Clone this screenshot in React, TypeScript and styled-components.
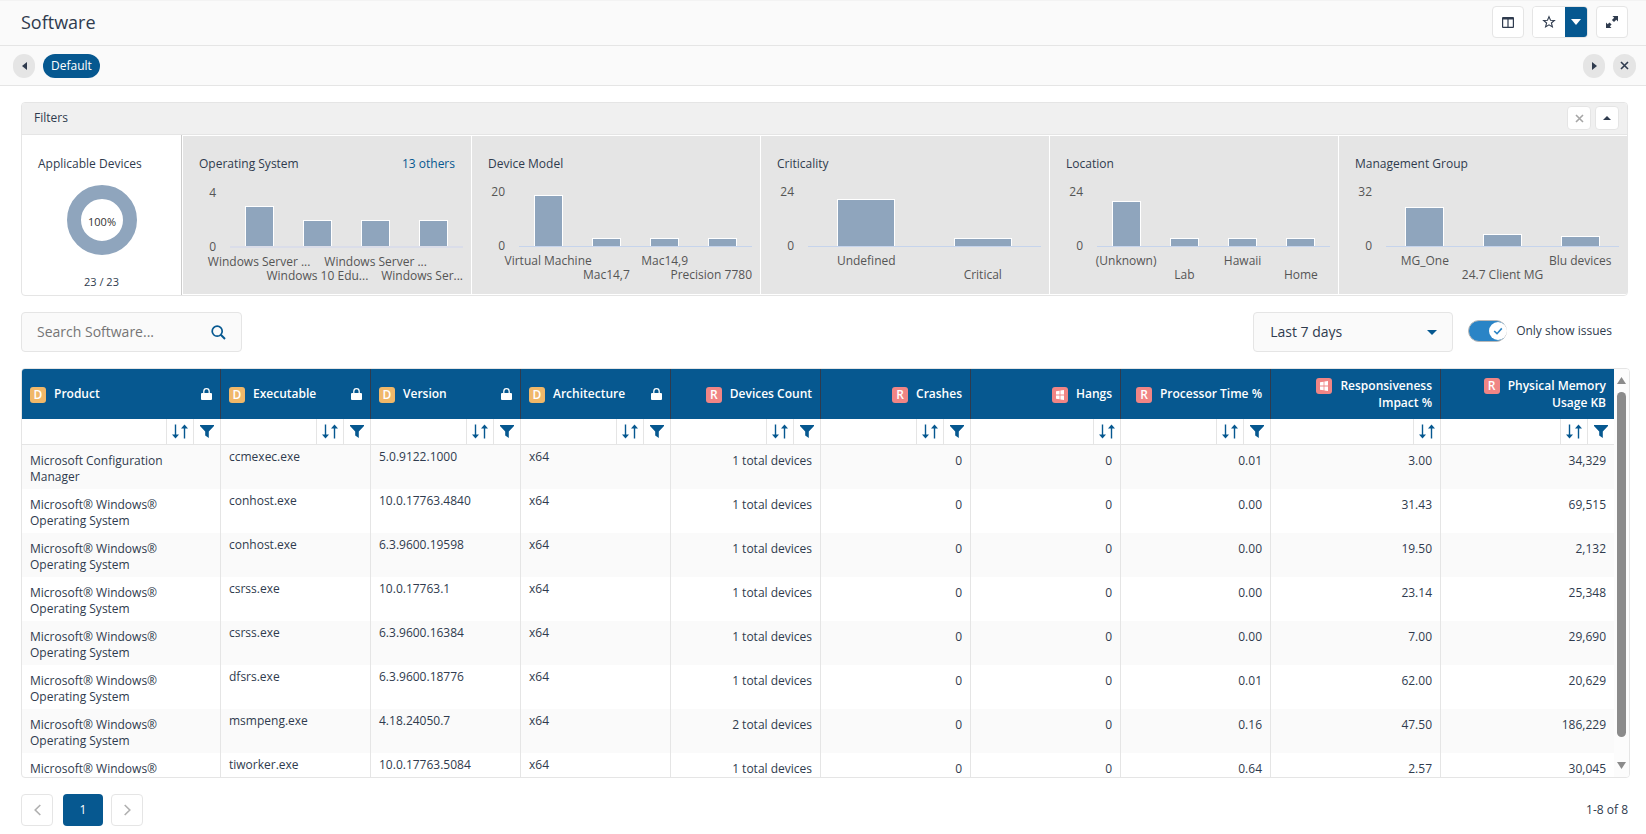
import React, { useState } from "react";
import styled, { createGlobalStyle, css } from "styled-components";

const color = {
  blue: "#065890",
  ink: "#2f3b4e",
  muted: "#555555",
  line: "#e5e5e5",
  panel: "#fafafa",
  bar: "#8fa5bd",
};

const GlobalStyle = createGlobalStyle`
  * { box-sizing: border-box; }
  body {
    margin: 0;
    background: #ffffff;
    color: ${color.ink};
    font-family: "Open Sans", "Noto Sans", sans-serif;
    font-size: 12px;
    line-height: 16px;
  }
  button, input, select { font: inherit; color: inherit; }
  button { cursor: pointer; padding: 0; }
  svg { display: block; }
`;

const Page = styled.div`
  display: flex;
  flex-direction: column;
  height: 100vh;
  min-height: 640px;
`;

/* ---------- top bars ---------- */

const TitleBar = styled.header`
  display: flex;
  align-items: center;
  justify-content: space-between;
  height: 46px;
  flex: none;
  padding: 0 18px 2px 21px;
  background: ${color.panel};
  border-top: 1px solid #f3f3f3;
  border-bottom: 1px solid ${color.line};
`;

const Title = styled.h1`
  margin: 0;
  font-size: 18px;
  line-height: 24px;
  font-weight: 500;
`;

const Actions = styled.div`
  display: flex;
  gap: 8px;
`;

const SquareButton = styled.button<{ $size?: number }>`
  display: flex;
  align-items: center;
  justify-content: center;
  width: ${(p) => p.$size ?? 32}px;
  height: ${(p) => p.$size ?? 32}px;
  background: #ffffff;
  border: 1px solid ${color.line};
  border-radius: 4px;
`;

const SplitButton = styled.div`
  display: flex;
  height: 32px;
  width: 56px;
  background: #ffffff;
  border: 1px solid ${color.line};
  border-radius: 4px;
  overflow: hidden;
`;

const SplitPart = styled.button<{ $filled?: boolean }>`
  display: flex;
  align-items: center;
  justify-content: center;
  flex: ${(p) => (p.$filled ? "0 0 22px" : "1")};
  border: 0;
  background: ${(p) => (p.$filled ? color.blue : "#ffffff")};
`;

const TabBar = styled.nav`
  display: flex;
  align-items: center;
  gap: 8px;
  height: 40px;
  flex: none;
  padding: 0 10px 0 13px;
  background: ${color.panel};
  border-bottom: 1px solid ${color.line};
`;

const RoundButton = styled.button<{ $wide?: boolean }>`
  display: flex;
  align-items: center;
  justify-content: center;
  width: ${(p) => (p.$wide ? 23 : 22)}px;
  height: 24px;
  border: 0;
  border-radius: 12px;
  background: #e5e5e5;
`;

const Chip = styled.button`
  height: 24px;
  padding: 0 8px;
  border: 0;
  border-radius: 12px;
  background: ${color.blue};
  color: #ffffff;
`;

const Spacer = styled.div`
  flex: 1;
`;

/* ---------- filters ---------- */

const Filters = styled.section`
  flex: none;
  margin: 16px 18px 0 21px;
  border: 1px solid ${color.line};
  border-radius: 4px;
  overflow: hidden;
`;

const FiltersHead = styled.div`
  display: flex;
  align-items: center;
  gap: 4px;
  height: 32px;
  padding: 0 8px 1px 12px;
  background: #f0f0f0;
  border-bottom: 1px solid ${color.line};
`;

const FiltersTitle = styled.h2`
  flex: 1;
  margin: 0;
  font-size: 12px;
  font-weight: 400;
`;

const FiltersBody = styled.div`
  display: flex;
  min-height: 160px;
`;

const DonutCard = styled.div`
  display: flex;
  flex-direction: column;
  flex: 0 0 160px;
  padding: 21px 16px 0;
  border-right: 1px solid #cccccc;
`;

const DonutWrap = styled.div`
  display: flex;
  justify-content: center;
  margin-top: 13px;
`;

const DonutCaption = styled.div`
  margin-top: 19px;
  text-align: center;
  font-size: 11px;
`;

const ChartCard = styled.div`
  flex: 1 1 0;
  min-width: 0;
  padding: 20px 8px 9px 16px;
  border: solid #ffffff;
  border-width: 1px 0 1px 1px;
  background: #e5e5e5;
`;

const ChartHead = styled.div`
  display: flex;
  justify-content: space-between;
  padding-right: 8px;
`;

const CardTitle = styled.h3`
  margin: 0;
  font-size: 12px;
  font-weight: 400;
`;

const OthersLink = styled.a`
  color: ${color.blue};
  text-decoration: none;
`;

const ChartGrid = styled.div<{ $soft: boolean }>`
  display: grid;
  grid-template-columns: 17px 1fr;
  column-gap: 14px;
  margin-top: ${(p) => (p.$soft ? 14 : 13)}px;
  color: ${color.muted};
`;

const Ticks = styled.div`
  display: flex;
  flex-direction: column;
  justify-content: space-between;
  height: 68px;
  text-align: right;
  line-height: 14px;
`;

const Plot = styled.div<{ $soft: boolean }>`
  display: flex;
  align-self: start;
  align-items: flex-end;
  height: 62px;
  border-bottom: ${(p) => (p.$soft ? "2px solid #dadde9" : "1px solid #c6d4ec")};
`;

const Band = styled.div`
  display: flex;
  flex: 1 1 0;
  justify-content: center;
`;

const Bar = styled.div<{ $height: number }>`
  width: 50%;
  height: ${(p) => p.$height}px;
  border: 1px solid #ffffff;
  border-bottom: 0;
  background: ${color.bar};
`;

const Labels = styled.div`
  display: flex;
  grid-column: 2;
  height: 30px;
`;

const Label = styled.div<{ $end?: boolean }>`
  display: flex;
  flex: 1 1 0;
  width: 0;
  justify-content: ${(p) => (p.$end ? "flex-end" : "center")};
  white-space: nowrap;
  &:nth-child(even) {
    padding-top: 14px;
  }
`;

/* ---------- toolbar ---------- */

const Toolbar = styled.div`
  display: flex;
  align-items: center;
  flex: none;
  margin: 16px 34px 0 21px;
`;

const fieldBox = css`
  height: 40px;
  background: ${color.panel};
  border: 1px solid ${color.line};
  border-radius: 4px;
  font-size: 14px;
`;

const SearchBox = styled.form`
  ${fieldBox}
  display: flex;
  align-items: center;
  width: 221px;
  padding: 0 15px;
`;

const SearchInput = styled.input`
  flex: 1;
  min-width: 0;
  padding: 0;
  border: 0;
  outline: 0;
  background: transparent;
  &::placeholder {
    color: #757575;
    opacity: 1;
  }
`;

const BareButton = styled.button`
  display: flex;
  border: 0;
  background: transparent;
`;

const SelectWrap = styled.div`
  display: grid;
  align-items: center;
  width: 200px;
  & > * {
    grid-area: 1 / 1;
  }
  & > svg {
    justify-self: end;
    margin-right: 16px;
    pointer-events: none;
  }
`;

const Select = styled.select`
  ${fieldBox}
  width: 100%;
  appearance: none;
  padding: 0 40px 0 16px;
`;

const Toggle = styled.label`
  display: flex;
  align-items: center;
  gap: 9px;
  margin-left: 15px;
  padding-bottom: 2px;
  cursor: pointer;
`;

const Switch = styled.span`
  display: grid;
  align-items: center;
  width: 39px;
  height: 22px;
  & > * {
    grid-area: 1 / 1;
  }
  & > svg {
    justify-self: end;
    pointer-events: none;
  }
`;

const SwitchInput = styled.input`
  appearance: none;
  width: 39px;
  height: 22px;
  margin: 0;
  border: 1px solid #b9b9b9;
  border-radius: 11px;
  background: #2a84c6;
`;

/* ---------- table ---------- */

const TableFrame = styled.div`
  display: flex;
  flex: 1 1 0;
  min-height: 0;
  margin: 16px 16px 0 21px;
  border: 1px solid ${color.line};
  border-radius: 4px;
  overflow: hidden;
`;

const TableScroll = styled.div`
  flex: 1;
  min-width: 0;
  overflow-x: hidden;
  overflow-y: auto;
  scrollbar-width: none;
`;

const Table = styled.table`
  width: 100%;
  table-layout: fixed;
  border-collapse: separate;
  border-spacing: 0;
`;

const Head = styled.th<{ $right?: boolean }>`
  height: 50px;
  padding: 0 8px;
  background: ${color.blue};
  color: #ffffff;
  font-weight: 600;
  line-height: 17px;
  text-align: ${(p) => (p.$right ? "right" : "left")};
  border-right: 1px solid #2f3b4e;
  &:last-child {
    border-right: 0;
  }
`;

const HeadFlex = styled.div`
  display: flex;
  align-items: center;
  justify-content: space-between;
`;

const Badge = styled.span<{ $kind: string }>`
  display: inline-flex;
  align-items: center;
  justify-content: center;
  width: 16px;
  height: 16px;
  margin-right: 8px;
  border-radius: 3px;
  line-height: 16px;
  vertical-align: middle;
  background: ${(p) => (p.$kind === "D" ? "#f0b869" : "#f08585")};
`;

const ToolCell = styled.td`
  height: 26px;
  padding: 0;
  border-right: 1px solid ${color.line};
  border-bottom: 1px solid ${color.line};
  &:last-child {
    border-right: 0;
  }
`;

const Tools = styled.div`
  display: flex;
  justify-content: flex-end;
  height: 25px;
`;

const ToolButton = styled.button`
  display: flex;
  align-items: center;
  justify-content: center;
  width: 27px;
  border: 0;
  border-left: 1px solid ${color.line};
  background: #ffffff;
`;

const Row = styled.tr`
  &:nth-child(odd) {
    background: ${color.panel};
  }
`;

const Cell = styled.td<{ $right?: boolean; $high?: boolean }>`
  height: 44px;
  padding: ${(p) => (p.$high ? 4 : 8)}px 8px 4px;
  vertical-align: top;
  text-align: ${(p) => (p.$right ? "right" : "left")};
  border-right: 1px solid ${color.line};
  &:last-child {
    border-right: 0;
  }
`;

const ScrollTrack = styled.div`
  display: flex;
  flex-direction: column;
  align-items: center;
  flex: 0 0 15px;
  padding: 8px 0;
  background: #fcfcfc;
`;

const ScrollThumb = styled.div`
  flex: 1;
  width: 9px;
  margin: 8px 0 25px;
  border-radius: 5px;
  background: #8b8b8b;
`;

/* ---------- pager ---------- */

const Footer = styled.footer`
  display: flex;
  align-items: center;
  flex: none;
  gap: 8px;
  margin: 16px 18px 8px 21px;
`;

const PageNumber = styled.button`
  width: 40px;
  height: 32px;
  margin-left: 2px;
  border: 0;
  border-radius: 4px;
  background: ${color.blue};
  color: #ffffff;
`;

/* ---------- icons ---------- */

const Triangle = ({ dir, fill = color.ink, w = 10, h = 5 }: { dir: "up" | "down" | "left" | "right"; fill?: string; w?: number; h?: number }) => {
  const d = {
    up: `M0 ${h}L${w / 2} 0L${w} ${h}Z`,
    down: `M0 0H${w}L${w / 2} ${h}Z`,
    left: `M${w} 0V${h}L0 ${h / 2}Z`,
    right: `M0 0V${h}L${w} ${h / 2}Z`,
  }[dir];
  return (
    <svg width={w} height={h} aria-hidden="true">
      <path d={d} fill={fill} />
    </svg>
  );
};

const CrossIcon = ({ stroke }: { stroke: string }) => (
  <svg width="9" height="9" viewBox="0 0 9 9" aria-hidden="true">
    <path d="M1 1L8 8M8 1L1 8" stroke={stroke} strokeWidth="1.6" />
  </svg>
);

const ColumnsIcon = () => (
  <svg width="12" height="11" viewBox="0 0 12 11" aria-hidden="true">
    <path fillRule="evenodd" fill={color.ink} d="M1 0H11A1 1 0 0 1 12 1V10A1 1 0 0 1 11 11H1A1 1 0 0 1 0 10V1A1 1 0 0 1 1 0ZM1.2 2.6V9.8H5.4V2.6ZM6.6 2.6V9.8H10.8V2.6Z" />
  </svg>
);

const StarIcon = () => (
  <svg width="14" height="14" viewBox="0 0 14 14" aria-hidden="true">
    <path d="M7 1.6L8.5 5.2L12.4 5.5L9.4 8L10.4 11.9L7 9.8L3.6 11.9L4.6 8L1.6 5.5L5.5 5.2Z" fill="none" stroke={color.ink} strokeWidth="1.1" />
  </svg>
);

const ExpandIcon = () => (
  <svg width="12" height="12" viewBox="0 0 12 12" aria-hidden="true">
    <path d="M6.5 0H12V5.5L10.3 3.8L8 6.1L5.9 4L8.2 1.7Z" fill={color.ink} />
    <path d="M0 6.5V12H5.5L3.8 10.3L5.6 8.5L3.5 6.4L1.7 8.2Z" fill={color.ink} />
  </svg>
);

const SearchIcon = () => (
  <svg width="15" height="15" viewBox="0 0 15 15" fill="none" stroke={color.blue} aria-hidden="true">
    <circle cx="6.2" cy="6.2" r="5" strokeWidth="1.7" />
    <path d="M9.8 9.8L14 14" strokeWidth="2" />
  </svg>
);

const KnobIcon = () => (
  <svg width="18" height="20" viewBox="0 0 18 20" aria-hidden="true">
    <circle cx="9" cy="10" r="9" fill="#ffffff" />
    <path d="M5.2 10L8 12.7L12.8 7.4" fill="none" stroke="#2a84c6" strokeWidth="1.6" />
  </svg>
);

const LockIcon = () => (
  <svg width="11" height="12" viewBox="0 0 11 12" aria-hidden="true">
    <path d="M2.8 6V3.4A2.7 2.7 0 0 1 8.2 3.4V6" fill="none" stroke="#ffffff" strokeWidth="1.3" />
    <rect y="5" width="11" height="7" rx="1" fill="#ffffff" />
  </svg>
);

const SortIcon = () => (
  <svg width="18" height="15" viewBox="0 0 18 15" aria-hidden="true">
    <path d="M4.5 0.5V13M13.5 2V14.5" stroke={color.blue} strokeWidth="1.4" />
    <path d="M1 10.4H8L4.5 14.5ZM10 4.6H17L13.5 0.5Z" fill={color.blue} />
  </svg>
);

const FunnelIcon = () => (
  <svg width="14" height="13" viewBox="0 0 14 13" aria-hidden="true">
    <path d="M0 0H14V1L8.8 6.5V13L5.2 10.6V6.5L0 1Z" fill={color.blue} />
  </svg>
);

const WindowsIcon = () => (
  <svg width="8" height="10" viewBox="0 0 8 10" aria-hidden="true">
    <path d="M0 1.2L3.6 0.7V4.6H0ZM4.4 0.6L8 0V4.6H4.4ZM0 5.4H3.6V9.3L0 8.8ZM4.4 5.4H8V10L4.4 9.4Z" fill="#ffffff" />
  </svg>
);

const Chevron = ({ dir }: { dir: "left" | "right" }) => (
  <svg width="7" height="12" viewBox="0 0 7 12" aria-hidden="true">
    <path d={dir === "left" ? "M6.3 1L1.2 6L6.3 11" : "M0.7 1L5.8 6L0.7 11"} fill="none" stroke="#b0b0b0" strokeWidth="1.6" />
  </svg>
);

const Donut = () => (
  <svg width="70" height="70" viewBox="0 0 70 70" role="img" aria-label="100%">
    <circle cx="35" cy="35" r="28" fill="none" stroke={color.bar} strokeWidth="14" />
    <text x="35" y="41" textAnchor="middle" fontSize="11" fill="#333333">100%</text>
  </svg>
);

/* ---------- data ---------- */

type Chart = { title: string; max: string; bars: [string, number][]; others?: string };

const charts: Chart[] = [
  { title: "Operating System", max: "4", others: "13 others", bars: [["Windows Server ...", 40], ["Windows 10 Edu...", 26], ["Windows Server ...", 26], ["Windows Ser...", 26]] },
  { title: "Device Model", max: "20", bars: [["Virtual Machine", 51], ["Mac14,7", 8], ["Mac14,9", 8], ["Precision 7780", 8]] },
  { title: "Criticality", max: "24", bars: [["Undefined", 47], ["Critical", 8]] },
  { title: "Location", max: "24", bars: [["(Unknown)", 45], ["Lab", 8], ["Hawaii", 8], ["Home", 8]] },
  { title: "Management Group", max: "32", bars: [["MG_One", 39], ["24.7 Client MG", 12], ["Blu devices", 10]] },
];

type Column = { name: string; kind: "D" | "R" | "W"; width: number; filter: boolean };

const columns: Column[] = [
  { name: "Product", kind: "D", width: 199, filter: true },
  { name: "Executable", kind: "D", width: 150, filter: true },
  { name: "Version", kind: "D", width: 150, filter: true },
  { name: "Architecture", kind: "D", width: 150, filter: true },
  { name: "Devices Count", kind: "R", width: 150, filter: true },
  { name: "Crashes", kind: "R", width: 150, filter: true },
  { name: "Hangs", kind: "W", width: 150, filter: false },
  { name: "Processor Time %", kind: "R", width: 150, filter: true },
  { name: "Responsiveness Impact %", kind: "W", width: 170, filter: false },
  { name: "Physical Memory Usage KB", kind: "R", width: 173, filter: true },
];

const win = "Microsoft® Windows® Operating System";

const rows: string[][] = [
  ["Microsoft Configuration Manager", "ccmexec.exe", "5.0.9122.1000", "x64", "1 total devices", "0", "0", "0.01", "3.00", "34,329"],
  [win, "conhost.exe", "10.0.17763.4840", "x64", "1 total devices", "0", "0", "0.00", "31.43", "69,515"],
  [win, "conhost.exe", "6.3.9600.19598", "x64", "1 total devices", "0", "0", "0.00", "19.50", "2,132"],
  [win, "csrss.exe", "10.0.17763.1", "x64", "1 total devices", "0", "0", "0.00", "23.14", "25,348"],
  [win, "csrss.exe", "6.3.9600.16384", "x64", "1 total devices", "0", "0", "0.00", "7.00", "29,690"],
  [win, "dfsrs.exe", "6.3.9600.18776", "x64", "1 total devices", "0", "0", "0.01", "62.00", "20,629"],
  [win, "msmpeng.exe", "4.18.24050.7", "x64", "2 total devices", "0", "0", "0.16", "47.50", "186,229"],
  [win, "tiworker.exe", "10.0.17763.5084", "x64", "1 total devices", "0", "0", "0.64", "2.57", "30,045"],
];

/* ---------- parts ---------- */

const FilterChart = ({ chart }: { chart: Chart }) => {
  const soft = Boolean(chart.others);
  return (
    <ChartCard>
      <ChartHead>
        <CardTitle>{chart.title}</CardTitle>
        {chart.others && <OthersLink href="#others">{chart.others}</OthersLink>}
      </ChartHead>
      <ChartGrid $soft={soft}>
        <Ticks>
          <span>{chart.max}</span>
          <span>0</span>
        </Ticks>
        <Plot $soft={soft}>
          {chart.bars.map(([, height], i) => (
            <Band key={i}>
              <Bar $height={height} />
            </Band>
          ))}
        </Plot>
        <Labels>
          {chart.bars.map(([label], i) => (
            <Label key={i} $end={i === 3 && label.length > 12}>
              {label}
            </Label>
          ))}
        </Labels>
      </ChartGrid>
    </ChartCard>
  );
};

const HeaderCell = ({ column }: { column: Column }) => {
  const text = (
    <>
      <Badge $kind={column.kind}>{column.kind === "W" ? <WindowsIcon /> : column.kind}</Badge>
      {column.name}
    </>
  );
  return column.kind === "D" ? (
    <Head scope="col">
      <HeadFlex>
        <span>{text}</span>
        <LockIcon />
      </HeadFlex>
    </Head>
  ) : (
    <Head scope="col" $right>
      {text}
    </Head>
  );
};

export default function App() {
  const [query, setQuery] = useState("");
  const [issuesOnly, setIssuesOnly] = useState(true);

  return (
    <>
      <GlobalStyle />
      <Page>
        <TitleBar>
          <Title>Software</Title>
          <Actions>
            <SquareButton aria-label="Columns">
              <ColumnsIcon />
            </SquareButton>
            <SplitButton>
              <SplitPart aria-label="Favorite">
                <StarIcon />
              </SplitPart>
              <SplitPart $filled aria-label="Favorite options">
                <Triangle dir="down" fill="#ffffff" w={10} h={6} />
              </SplitPart>
            </SplitButton>
            <SquareButton aria-label="Full screen">
              <ExpandIcon />
            </SquareButton>
          </Actions>
        </TitleBar>

        <TabBar>
          <RoundButton aria-label="Previous view">
            <Triangle dir="left" w={5} h={8} />
          </RoundButton>
          <Chip>Default</Chip>
          <Spacer />
          <RoundButton aria-label="Next view">
            <Triangle dir="right" w={5} h={8} />
          </RoundButton>
          <RoundButton $wide aria-label="Close views">
            <CrossIcon stroke={color.ink} />
          </RoundButton>
        </TabBar>

        <Filters>
          <FiltersHead>
            <FiltersTitle>Filters</FiltersTitle>
            <SquareButton $size={24} aria-label="Clear filters">
              <CrossIcon stroke="#a6a6a6" />
            </SquareButton>
            <SquareButton $size={24} aria-label="Collapse filters">
              <Triangle dir="up" w={8} h={4} />
            </SquareButton>
          </FiltersHead>
          <FiltersBody>
            <DonutCard>
              <CardTitle>Applicable Devices</CardTitle>
              <DonutWrap>
                <Donut />
              </DonutWrap>
              <DonutCaption>23 / 23</DonutCaption>
            </DonutCard>
            {charts.map((chart) => (
              <FilterChart key={chart.title} chart={chart} />
            ))}
          </FiltersBody>
        </Filters>

        <Toolbar>
          <SearchBox onSubmit={(e) => e.preventDefault()}>
            <SearchInput aria-label="Search Software" placeholder="Search Software..." value={query} onChange={(e) => setQuery(e.target.value)} />
            <BareButton type="submit" aria-label="Search">
              <SearchIcon />
            </BareButton>
          </SearchBox>
          <Spacer />
          <SelectWrap>
            <Select aria-label="Time range" defaultValue="7">
              <option value="7">Last 7 days</option>
              <option value="30">Last 30 days</option>
            </Select>
            <Triangle dir="down" fill={color.blue} w={10} h={5} />
          </SelectWrap>
          <Toggle>
            <Switch>
              <SwitchInput type="checkbox" role="switch" checked={issuesOnly} onChange={(e) => setIssuesOnly(e.target.checked)} />
              <KnobIcon />
            </Switch>
            Only show issues
          </Toggle>
        </Toolbar>

        <TableFrame>
          <TableScroll>
            <Table>
              <colgroup>
                {columns.map((c) => (
                  <col key={c.name} width={c.width} />
                ))}
              </colgroup>
              <thead>
                <tr>
                  {columns.map((c) => (
                    <HeaderCell key={c.name} column={c} />
                  ))}
                </tr>
                <tr>
                  {columns.map((c) => (
                    <ToolCell key={c.name}>
                      <Tools>
                        <ToolButton aria-label={`Sort by ${c.name}`}>
                          <SortIcon />
                        </ToolButton>
                        {c.filter && (
                          <ToolButton aria-label={`Filter ${c.name}`}>
                            <FunnelIcon />
                          </ToolButton>
                        )}
                      </Tools>
                    </ToolCell>
                  ))}
                </tr>
              </thead>
              <tbody>
                {rows.map((row, r) => (
                  <Row key={r}>
                    {row.map((value, c) => (
                      <Cell key={c} $right={c > 3} $high={c > 0 && c < 4}>
                        {value}
                      </Cell>
                    ))}
                  </Row>
                ))}
              </tbody>
            </Table>
          </TableScroll>
          <ScrollTrack aria-hidden="true">
            <Triangle dir="up" fill="#8b8b8b" w={9} h={7} />
            <ScrollThumb />
            <Triangle dir="down" fill="#8b8b8b" w={9} h={7} />
          </ScrollTrack>
        </TableFrame>

        <Footer>
          <SquareButton aria-label="Previous page">
            <Chevron dir="left" />
          </SquareButton>
          <PageNumber aria-current="page">1</PageNumber>
          <SquareButton aria-label="Next page">
            <Chevron dir="right" />
          </SquareButton>
          <Spacer />
          <span>1-8 of 8</span>
        </Footer>
      </Page>
    </>
  );
}
